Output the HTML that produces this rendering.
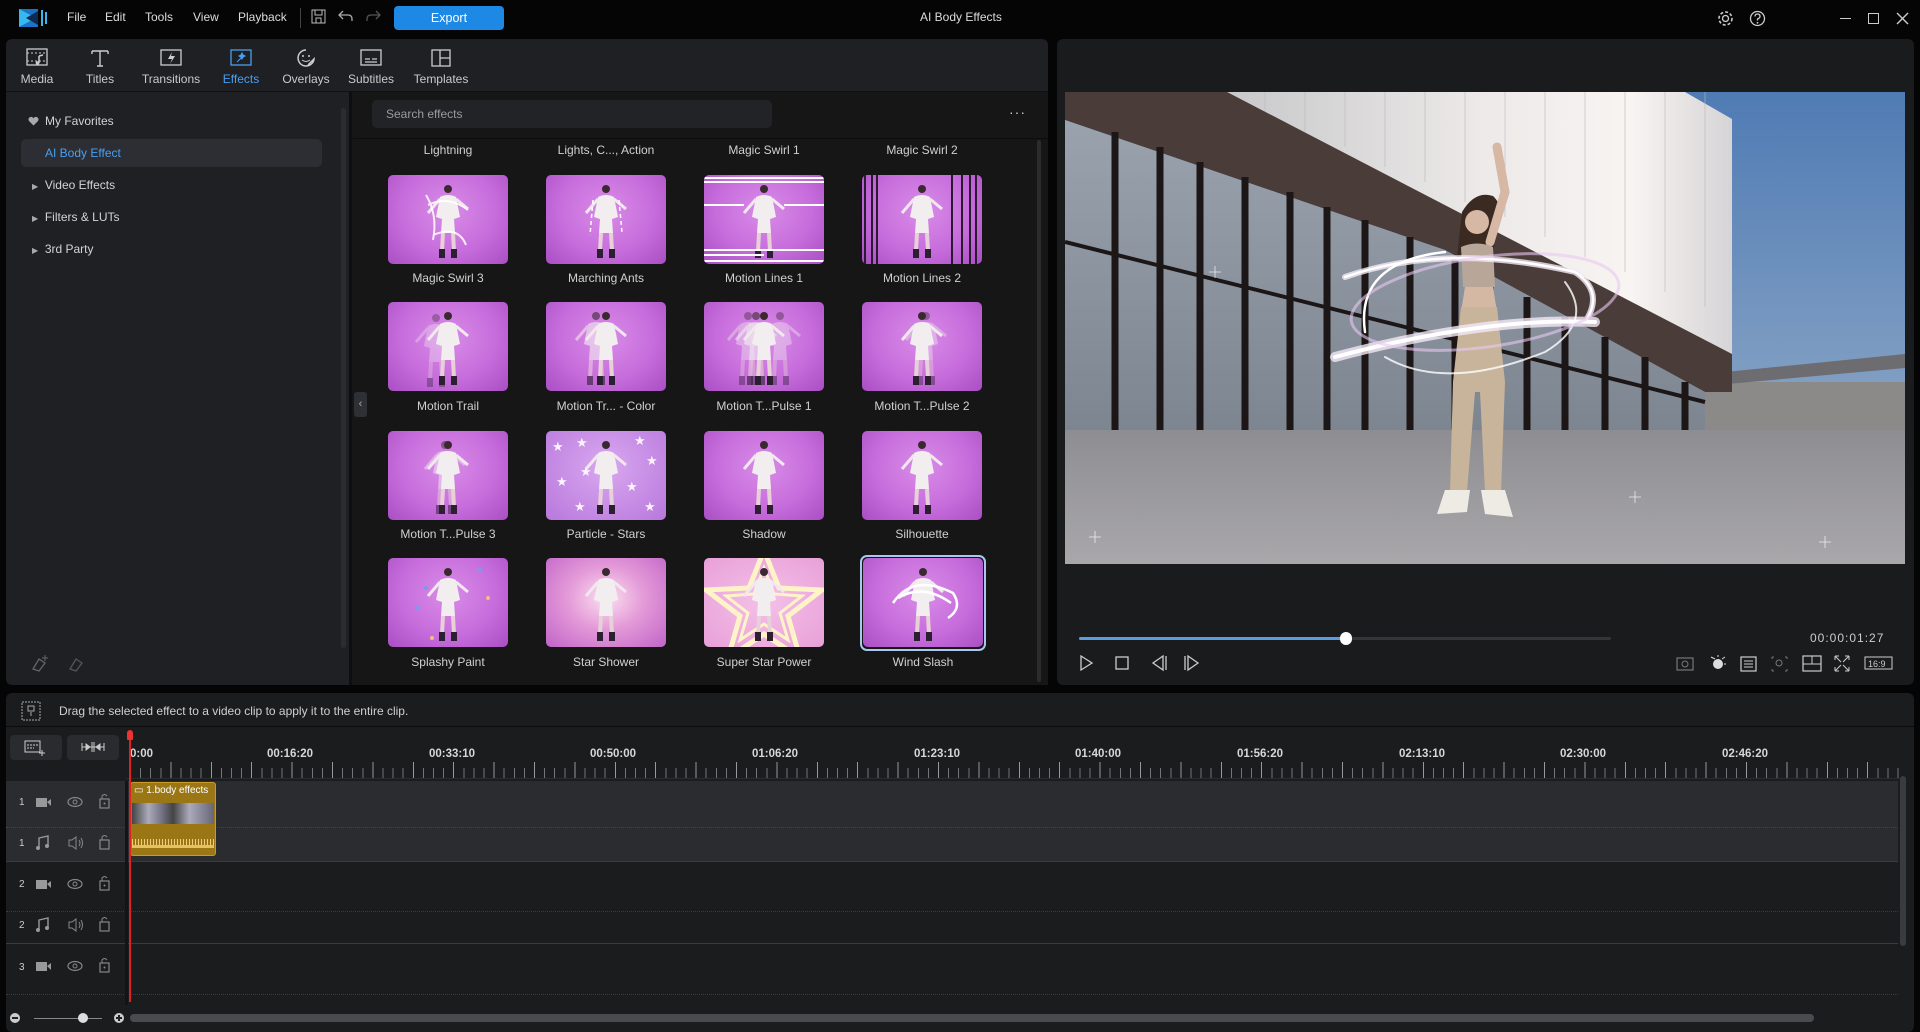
<!DOCTYPE html>
<html><head><meta charset="utf-8">
<style>
*{margin:0;padding:0;box-sizing:border-box}
body{width:1920px;height:1032px;background:#050506;font-family:"Liberation Sans",sans-serif;color:#cfd0d2;position:relative;overflow:hidden;font-size:12px}
.a{position:absolute}
.t{position:absolute;white-space:nowrap}
.panel{position:absolute;border-radius:6px}
.thumb{position:absolute;width:120px;height:89px;border-radius:5px;overflow:hidden;background:radial-gradient(ellipse at 50% 40%,#d98ce8 0%,#c76ddc 55%,#a94fc4 100%)}
.thumb svg{position:absolute;left:0;top:0}
.lbl{position:absolute;width:150px;text-align:center;font-size:12px;color:#cfd0d2}
.tab{position:absolute;top:48px;width:70px;text-align:center;font-size:12px;color:#c9cacc}
.tab svg{display:block;margin:0 auto 4px}
.tree{position:absolute;font-size:12px;color:#d2d3d5}
.rl{position:absolute;top:748px;font-size:11.5px;font-weight:bold;color:#d6d7d9}
.ic{position:absolute}
</style></head><body>
<svg width="0" height="0" style="position:absolute">
<defs>
<g id="fig">
<circle cx="60" cy="14" r="4" fill="#3a2a30"/>
<path d="M52 22 Q60 18 68 22 L72 42 L66 44 L67 58 L53 58 L54 44 L48 42 Z" fill="#f2eef0"/>
<path d="M52 24 L40 38 M68 24 L80 34" stroke="#f0e8ec" stroke-width="3" fill="none"/>
<path d="M55 58 L54 76 M65 58 L66 76" stroke="#e8d0d8" stroke-width="4"/>
<rect x="51" y="74" width="6" height="9" fill="#2a2030"/><rect x="63" y="74" width="6" height="9" fill="#2a2030"/>
</g>
</defs>
</svg>

<div class="a" style="left:0;top:0;width:1920px;height:39px;background:#050506"></div>
<svg class="ic" style="left:18px;top:8px" width="30" height="20" viewBox="0 0 30 20"><path d="M1 1 L20 1 L20 19 L1 19 Z" fill="#1a73c8"/><path d="M1 1 L18 10 L1 19 Z" fill="#38b8f0"/><path d="M8 10 L20 3 L20 17 Z" fill="#0d2a50"/><rect x="23" y="2" width="2" height="16" fill="#38b8f0"/><rect x="27" y="4" width="2" height="12" fill="#38b8f0"/></svg>
<div class="t" style="left:67px;top:10px;font-size:12px;color:#ddd">File</div>
<div class="t" style="left:105px;top:10px;font-size:12px;color:#ddd">Edit</div>
<div class="t" style="left:145px;top:10px;font-size:12px;color:#ddd">Tools</div>
<div class="t" style="left:193px;top:10px;font-size:12px;color:#ddd">View</div>
<div class="t" style="left:238px;top:10px;font-size:12px;color:#ddd">Playback</div>
<div class="a" style="left:300px;top:8px;width:1px;height:20px;background:#444"></div>
<svg class="ic" style="left:311px;top:9px" width="15" height="15" viewBox="0 0 15 15"><rect x="1" y="1" width="13" height="13" fill="none" stroke="#bbb"/><rect x="4" y="1" width="7" height="5" fill="none" stroke="#bbb"/><rect x="5" y="9" width="5" height="5" fill="none" stroke="#bbb"/></svg>
<svg class="ic" style="left:338px;top:10px" width="16" height="12" viewBox="0 0 16 12"><path d="M5 1 L1 5 L5 9 M1 5 H10 Q14 5 14 9 V11" fill="none" stroke="#aaa" stroke-width="1.3"/></svg>
<svg class="ic" style="left:365px;top:10px" width="16" height="12" viewBox="0 0 16 12"><path d="M11 1 L15 5 L11 9 M15 5 H6 Q2 5 2 9 V11" fill="none" stroke="#555" stroke-width="1.3"/></svg>
<div class="a" style="left:394px;top:6px;width:110px;height:24px;background:#1e88e5;border-radius:4px;color:#fff;text-align:center;line-height:24px;font-size:12.5px">Export</div>
<div class="t" style="left:920px;top:10px;font-size:12px;color:#ddd">AI Body Effects</div>
<svg class="ic" style="left:1717px;top:10px" width="17" height="17" viewBox="0 0 17 17"><circle cx="8.5" cy="8.5" r="3" fill="none" stroke="#ccc" stroke-width="1.3"/><circle cx="8.5" cy="8.5" r="6.5" fill="none" stroke="#ccc" stroke-width="1.6" stroke-dasharray="3 2"/></svg>
<svg class="ic" style="left:1749px;top:10px" width="17" height="17" viewBox="0 0 17 17"><circle cx="8.5" cy="8.5" r="7" fill="none" stroke="#ccc" stroke-width="1.3"/><path d="M6 6.5 Q6 4 8.5 4 Q11 4 11 6.5 Q11 8 8.5 9 V10.5" fill="none" stroke="#ccc" stroke-width="1.3"/><circle cx="8.5" cy="12.8" r="0.9" fill="#ccc"/></svg>
<div class="a" style="left:1840px;top:18px;width:11px;height:1px;background:#ccc"></div>
<div class="a" style="left:1868px;top:13px;width:11px;height:11px;border:1.3px solid #ccc"></div>
<svg class="ic" style="left:1896px;top:12px" width="13" height="13" viewBox="0 0 13 13"><path d="M1 1 L12 12 M12 1 L1 12" stroke="#ccc" stroke-width="1.4"/></svg>

<div class="panel" style="left:6px;top:39px;width:1042px;height:646px;background:#1f2023"></div>
<div class="a" style="left:6px;top:91px;width:1042px;height:1px;background:#111"></div>
<div class="tab" style="left:2px"><svg width="22" height="20" viewBox="0 0 22 20"><rect x="1" y="1" width="20" height="16" fill="none" stroke="#ccc" stroke-width="1.3"/><path d="M1 5 H21 M1 13 H21" stroke="#ccc" stroke-dasharray="2 2"/><path d="M13 8 V15 M13 8 L17 7" stroke="#ccc" stroke-width="1.5"/><circle cx="11.5" cy="15" r="1.8" fill="#ccc"/></svg>Media</div>
<div class="tab" style="left:65px"><svg width="22" height="20" viewBox="0 0 22 20"><path d="M3 3 H19 M11 3 V18 M3 3 V6 M19 3 V6 M8 18 H14" stroke="#ccc" stroke-width="1.4" fill="none"/></svg>Titles</div>
<div class="tab" style="left:136px"><svg width="22" height="20" viewBox="0 0 22 20"><rect x="1" y="2" width="20" height="15" fill="none" stroke="#ccc" stroke-width="1.3"/><path d="M12 4 L8 11 H12 L10 16 L15 8 H11 Z" fill="#ccc"/></svg>Transitions</div>
<div class="tab" style="left:206px;color:#4a9ff0"><svg width="22" height="20" viewBox="0 0 22 20"><rect x="1" y="2" width="20" height="15" fill="none" stroke="#4a9ff0" stroke-width="1.3"/><path d="M7 14 L13 8 M12 5 L13 7 L15 8 L13 9 L12 11 L11 9 L9 8 L11 7 Z" stroke="#4a9ff0" fill="#4a9ff0"/></svg>Effects</div>
<div class="tab" style="left:271px"><svg width="22" height="20" viewBox="0 0 22 20"><path d="M11 2 A8 8 0 1 0 19 11 L13 17" fill="none" stroke="#ccc" stroke-width="1.5"/><circle cx="8" cy="8" r="1" fill="#ccc"/><circle cx="14" cy="8" r="1" fill="#ccc"/><path d="M7 12 Q11 15 15 12" fill="none" stroke="#ccc"/></svg>Overlays</div>
<div class="tab" style="left:336px"><svg width="22" height="20" viewBox="0 0 22 20"><rect x="1" y="2" width="20" height="15" fill="none" stroke="#ccc" stroke-width="1.3"/><path d="M5 11 H10 M12 11 H17 M5 14 H17" stroke="#ccc" stroke-width="1.3"/></svg>Subtitles</div>
<div class="tab" style="left:406px"><svg width="22" height="20" viewBox="0 0 22 20"><rect x="2" y="2" width="18" height="16" fill="none" stroke="#ccc" stroke-width="1.3"/><path d="M10 2 V18 M10 10 H20" stroke="#ccc" stroke-width="1.3"/></svg>Templates</div>

<svg class="ic" style="left:28px;top:116px" width="11" height="10" viewBox="0 0 11 10"><path d="M5.5 9.5 L1 5 Q-0.5 2 2.5 1 Q4.5 0.5 5.5 2.5 Q6.5 0.5 8.5 1 Q11.5 2 10 5 Z" fill="#aaa"/></svg>
<div class="tree" style="left:45px;top:114px">My Favorites</div>
<div class="a" style="left:21px;top:139px;width:301px;height:28px;background:#2c2e33;border-radius:5px"></div>
<div class="tree" style="left:45px;top:146px;color:#4a9ff0">AI Body Effect</div>
<div class="tree" style="left:32px;top:178px"><span style="font-size:8px;color:#aaa">▶</span>&nbsp; Video Effects</div>
<div class="tree" style="left:32px;top:210px"><span style="font-size:8px;color:#aaa">▶</span>&nbsp; Filters &amp; LUTs</div>
<div class="tree" style="left:32px;top:242px"><span style="font-size:8px;color:#aaa">▶</span>&nbsp; 3rd Party</div>
<div class="a" style="left:341px;top:108px;width:5px;height:540px;background:#2b2c30;border-radius:3px"></div>
<svg class="ic" style="left:30px;top:654px" width="20" height="18" viewBox="0 0 20 18"><path d="M3 15 L9 5 L15 9 L9 17 Z" fill="none" stroke="#666" stroke-width="1.3"/><path d="M15 1 V7 M12 4 H18" stroke="#666"/></svg>
<svg class="ic" style="left:67px;top:654px" width="20" height="18" viewBox="0 0 20 18"><path d="M3 15 L9 5 L15 9 L9 17 Z" fill="none" stroke="#555" stroke-width="1.3"/></svg>

<div class="a" style="left:352px;top:92px;width:696px;height:593px;background:#161617"></div>
<div class="a" style="left:349px;top:92px;width:3px;height:593px;background:#0e0e0f"></div>
<div class="a" style="left:372px;top:100px;width:400px;height:28px;background:#222326;border-radius:5px"></div>
<div class="t" style="left:386px;top:107px;color:#9a9b9e">Search effects</div>
<div class="t" style="left:1009px;top:104px;color:#ccc;font-size:14px;letter-spacing:1px">···</div>
<div class="a" style="left:353px;top:138px;width:695px;height:1px;background:#0c0c0c"></div>
<div class="a" style="left:1037px;top:140px;width:4px;height:542px;background:#2b2c30;border-radius:3px"></div>
<div class="a" style="left:354px;top:392px;width:13px;height:25px;background:#2e3035;border-radius:3px;color:#aaa;font-size:11px;text-align:center;line-height:25px">‹</div>

<div class="lbl" style="left:373px;top:143px">Lightning</div>
<div class="lbl" style="left:531px;top:143px">Lights, C..., Action</div>
<div class="lbl" style="left:689px;top:143px">Magic Swirl 1</div>
<div class="lbl" style="left:847px;top:143px">Magic Swirl 2</div>

<div class="thumb" style="left:388px;top:175px"><svg width="120" height="89"><use href="#fig"/><path d="M40 30 Q60 20 80 35 M45 60 Q70 50 78 70 M38 20 Q50 40 45 65" stroke="#fff" stroke-width="2" fill="none" opacity=".85"/></svg></div>
<div class="thumb" style="left:546px;top:175px"><svg width="120" height="89"><use href="#fig"/><path d="M47 25 L44 60 M73 25 L76 58" stroke="#fff" stroke-width="1.5" stroke-dasharray="4 3"/></svg></div>
<div class="thumb" style="left:704px;top:175px"><svg width="120" height="89"><use href="#fig"/><path d="M0 3 H120 M0 7 H120 M0 30 H40 M80 30 H120 M0 75 H120 M0 80 H60 M0 86 H120" stroke="#fff" stroke-width="2"/></svg></div>
<div class="thumb" style="left:862px;top:175px"><svg width="120" height="89"><use href="#fig"/><path d="M3 0 V89 M10 0 V89 M15 0 V89 M90 0 V89 M100 0 V89 M108 0 V89 M114 0 V89" stroke="#2a1a30" stroke-width="2"/></svg></div>
<div class="lbl" style="left:373px;top:271px">Magic Swirl 3</div>
<div class="lbl" style="left:531px;top:271px">Marching Ants</div>
<div class="lbl" style="left:689px;top:271px">Motion Lines 1</div>
<div class="lbl" style="left:847px;top:271px">Motion Lines 2</div>

<div class="thumb" style="left:388px;top:302px"><svg width="120" height="89"><g opacity=".35" transform="translate(-12,2)"><use href="#fig"/></g><use href="#fig"/></svg></div>
<div class="thumb" style="left:546px;top:302px"><svg width="120" height="89"><g opacity=".6" transform="translate(-10,0)"><use href="#fig"/></g><use href="#fig"/></svg></div>
<div class="thumb" style="left:704px;top:302px"><svg width="120" height="89"><g opacity=".4" transform="translate(-16,0)"><use href="#fig"/></g><g opacity=".4" transform="translate(16,0)"><use href="#fig"/></g><g opacity=".6" transform="translate(-8,0)"><use href="#fig"/></g><use href="#fig"/></svg></div>
<div class="thumb" style="left:862px;top:302px"><svg width="120" height="89"><g opacity=".4" transform="translate(4,0)"><use href="#fig"/></g><use href="#fig"/></svg></div>
<div class="lbl" style="left:373px;top:399px">Motion Trail</div>
<div class="lbl" style="left:531px;top:399px">Motion Tr... - Color</div>
<div class="lbl" style="left:689px;top:399px">Motion T...Pulse 1</div>
<div class="lbl" style="left:847px;top:399px">Motion T...Pulse 2</div>

<div class="thumb" style="left:388px;top:431px"><svg width="120" height="89"><g opacity=".5" transform="translate(-3,0)"><use href="#fig"/></g><use href="#fig"/></svg></div>
<div class="thumb" style="left:546px;top:431px;background:radial-gradient(ellipse at 50% 40%,#d9a8f0,#b878dc)"><svg width="120" height="89"><use href="#fig"/><g fill="#fff" opacity=".9" font-size="13" font-family="DejaVu Sans"><text x="6" y="20">★</text><text x="30" y="16">★</text><text x="88" y="14">★</text><text x="100" y="34">★</text><text x="10" y="55">★</text><text x="28" y="80">★</text><text x="80" y="60">★</text><text x="98" y="80">★</text><text x="34" y="45">★</text></g></svg></div>
<div class="thumb" style="left:704px;top:431px"><svg width="120" height="89"><use href="#fig"/></svg></div>
<div class="thumb" style="left:862px;top:431px"><svg width="120" height="89"><use href="#fig"/></svg></div>
<div class="lbl" style="left:373px;top:527px">Motion T...Pulse 3</div>
<div class="lbl" style="left:531px;top:527px">Particle - Stars</div>
<div class="lbl" style="left:689px;top:527px">Shadow</div>
<div class="lbl" style="left:847px;top:527px">Silhouette</div>

<div class="thumb" style="left:388px;top:558px"><svg width="120" height="89"><use href="#fig"/><g fill="#6fa0f0"><circle cx="30" cy="50" r="2"/><circle cx="92" cy="12" r="2"/><circle cx="38" cy="30" r="2"/></g><g fill="#f0c080"><circle cx="100" cy="40" r="2"/><circle cx="44" cy="80" r="2"/></g></svg></div>
<div class="thumb" style="left:546px;top:558px;background:radial-gradient(ellipse at 50% 45%,#fbe0f0 0%,#e49ad8 45%,#c064c8 100%)"><svg width="120" height="89"><use href="#fig"/></svg></div>
<div class="thumb" style="left:704px;top:558px;background:radial-gradient(ellipse at 50% 50%,#f4c0e8,#e8a0d8)"><svg width="120" height="89"><path d="M60 -8 L75 30 L118 32 L84 58 L96 100 L60 76 L24 100 L36 58 L2 32 L45 30 Z" fill="none" stroke="#fff4c8" stroke-width="5"/><path d="M60 10 L70 36 L98 38 L76 55 L84 82 L60 66 L36 82 L44 55 L22 38 L50 36 Z" fill="none" stroke="#fff4c8" stroke-width="3"/><use href="#fig"/></svg></div>
<div class="a" style="left:860px;top:555px;width:126px;height:96px;border:2px solid #a8c8ee;border-radius:7px"></div>
<div class="thumb" style="left:863px;top:558px"><svg width="120" height="89"><use href="#fig"/><path d="M30 45 Q50 15 90 35 Q100 50 85 60 M35 40 Q60 25 88 45" stroke="#fff" stroke-width="2.5" fill="none"/></svg></div>
<div class="lbl" style="left:373px;top:655px">Splashy Paint</div>
<div class="lbl" style="left:531px;top:655px">Star Shower</div>
<div class="lbl" style="left:689px;top:655px">Super Star Power</div>
<div class="lbl" style="left:848px;top:655px">Wind Slash</div>

<div class="panel" style="left:1057px;top:39px;width:857px;height:646px;background:#1a1b1d"></div>
<svg class="a" style="left:1065px;top:92px" width="840" height="472" viewBox="0 0 840 472">
<defs>
<linearGradient id="sky" x1="0" y1="0" x2="0" y2="1"><stop offset="0" stop-color="#4f7bb4"/><stop offset="1" stop-color="#9fb4cc"/></linearGradient>
<linearGradient id="wall" x1="0" y1="0" x2="1" y2="0"><stop offset="0" stop-color="#c8c8ca"/><stop offset=".5" stop-color="#ece9e8"/><stop offset=".8" stop-color="#f8f4f2"/><stop offset="1" stop-color="#d6d4d6"/></linearGradient>
<linearGradient id="pane" x1="0" y1="0" x2="0" y2="1"><stop offset="0" stop-color="#9aa2ae"/><stop offset="1" stop-color="#7c8590"/></linearGradient>
<linearGradient id="gnd" x1="0" y1="0" x2="0" y2="1"><stop offset="0" stop-color="#8e8e92"/><stop offset="1" stop-color="#a9a7aa"/></linearGradient>
</defs>
<rect width="840" height="472" fill="url(#sky)"/>
<rect x="640" y="290" width="200" height="60" fill="#8b8a88"/>
<path d="M640 282 L840 262 L840 276 L640 294 Z" fill="#6d6c70"/>
<path d="M162 0 L620 0 L667 27 L667 262 L640 262 Z" fill="url(#wall)"/>
<g stroke="#b8b6b8" stroke-width="1" opacity=".6"><path d="M200 0 V20 M240 0 V40 M280 0 V55 M320 0 V75 M360 0 V90 M400 0 V110 M440 0 V125 M480 0 V145 M520 0 V165 M560 0 V180 M600 0 V200 M640 0 V215"/></g>
<path d="M0 0 L162 0 L667 262 L667 300 L640 300 L380 158 L0 28 Z" fill="#4a3c38"/>
<path d="M0 28 L380 158 L640 300 L640 340 L0 340 Z" fill="url(#pane)"/>
<g stroke="#1c1616" stroke-width="7"><path d="M50 40 V340 M95 55 V340 M135 70 V340 M180 85 V340 M225 100 V340 M262 115 V340 M300 128 V340 M345 145 V340 M390 165 V340 M425 185 V340 M462 205 V340 M500 225 V340 M540 245 V340 M580 265 V340 M620 290 V340"/></g>
<path d="M0 150 L640 310" stroke="#1c1616" stroke-width="4"/>
<rect x="0" y="338" width="840" height="134" fill="url(#gnd)"/>
<path d="M397 120 Q410 98 428 104 Q440 115 432 135 L428 160 L392 165 Z" fill="#3a2a22"/>
<circle cx="412" cy="130" r="12" fill="#d6b8a4"/>
<path d="M425 150 L440 100 L432 55" stroke="#d6b8a4" stroke-width="9" fill="none" stroke-linecap="round"/>
<path d="M396 155 Q412 148 428 155 L430 195 L398 195 Z" fill="#b8a698"/>
<path d="M400 195 L428 195 L432 220 L396 220 Z" fill="#d4b8a4"/>
<path d="M396 215 L432 215 L440 290 L436 400 L420 400 L415 300 L410 300 L402 400 L385 400 L388 290 Z" fill="#c8b49a"/>
<path d="M380 398 L405 398 L402 420 L372 422 Z M416 398 L440 398 L448 425 L420 422 Z" fill="#eeeae4"/>
<g fill="none" stroke="#f3e8f6" stroke-linecap="round" opacity=".8">
<path d="M270 265 Q420 225 530 230" stroke-width="10"/>
<path d="M280 185 Q380 150 510 180 Q540 200 520 230" stroke-width="6"/>
</g>
<g fill="none" stroke="#fff" stroke-linecap="round">
<path d="M270 265 Q420 225 530 230" stroke-width="4"/>
<path d="M280 185 Q380 150 510 180 Q540 200 520 230" stroke-width="2.5"/>
<path d="M300 240 Q290 170 380 160" stroke-width="2.5"/>
<path d="M320 265 Q380 300 480 260 Q530 230 500 190" stroke-width="2" opacity=".8"/>
<ellipse cx="420" cy="210" rx="135" ry="45" stroke="#e8c8f0" stroke-width="3" opacity=".6" transform="rotate(-8 420 210)"/>
</g>
<g stroke="#fff" stroke-width="0.8" opacity=".8"><path d="M24 445 H36 M30 439 V451 M564 405 H576 M570 399 V411 M144 180 H156 M150 174 V186 M754 450 H766 M760 444 V456"/></g>
</svg>
<div class="a" style="left:1079px;top:637px;width:532px;height:3px;background:#333539;border-radius:2px"></div>
<div class="a" style="left:1079px;top:637px;width:267px;height:3px;background:#5b9be0;border-radius:2px"></div>
<div class="a" style="left:1340px;top:632px;width:12px;height:13px;background:#fff;border-radius:6px"></div>
<div class="t" style="left:1810px;top:631px;font-size:12px;color:#ccc;letter-spacing:1px">00:00:01:27</div>
<svg class="ic" style="left:1079px;top:654px" width="140" height="18" viewBox="0 0 140 18"><path d="M2 2 L13 9 L2 16 Z" fill="none" stroke="#ccc" stroke-width="1.3"/><rect x="37" y="3" width="12" height="12" fill="none" stroke="#ccc" stroke-width="1.3"/><path d="M84 2 L74 9 L84 16 Z M87 2 V16" fill="none" stroke="#ccc" stroke-width="1.3"/><path d="M106 2 V16 M109 2 L119 9 L109 16 Z" fill="none" stroke="#ccc" stroke-width="1.3"/></svg>
<svg class="ic" style="left:1675px;top:653px" width="240" height="20" viewBox="0 0 240 20"><rect x="2" y="5" width="16" height="12" fill="none" stroke="#777" stroke-width="1.2"/><circle cx="10" cy="11" r="3" fill="none" stroke="#777"/><circle cx="43" cy="11" r="5" fill="#ddd"/><path d="M36 4 L40 6 M43 2 V4 M50 4 L47 6 M51 11 H49" stroke="#ddd"/><rect x="66" y="4" width="15" height="14" fill="none" stroke="#ccc" stroke-width="1.2"/><path d="M69 8 H78 M69 11 H78 M69 14 H78" stroke="#ccc"/><path d="M97 4 H99 M97 4 V6 M112 4 H110 M112 4 V6 M97 18 V16 M97 18 H99 M112 18 H110 M112 18 V16" stroke="#777"/><circle cx="104" cy="10" r="3" fill="none" stroke="#777"/><rect x="128" y="3" width="18" height="15" fill="none" stroke="#ccc" stroke-width="1.2"/><path d="M128 11 H146 M137 3 V11" stroke="#ccc"/><path d="M160 3 L166 9 M174 3 L168 9 M160 18 L166 12 M174 18 L168 12 M160 3 H164 M160 3 V7 M174 3 H170 M174 3 V7 M160 18 H164 M160 18 V14 M174 18 H170 M174 18 V14" stroke="#ccc" fill="none"/><rect x="190" y="4" width="27" height="12" fill="none" stroke="#ccc"/><text x="193" y="14" font-size="9" fill="#ccc" font-family="Liberation Sans">16:9</text></svg>

<div class="panel" style="left:6px;top:693px;width:1908px;height:339px;background:#1b1c1e"></div>
<div class="a" style="left:6px;top:726px;width:1908px;height:1px;background:#0c0c0d"></div>
<svg class="ic" style="left:21px;top:701px" width="20" height="20" viewBox="0 0 20 20"><rect x="1" y="1" width="18" height="18" fill="none" stroke="#aaa" stroke-dasharray="2 1"/><rect x="7" y="5" width="6" height="5" fill="none" stroke="#aaa"/><path d="M10 11 V15" stroke="#aaa"/></svg>
<div class="t" style="left:59px;top:704px;font-size:12px;color:#cfd0d2">Drag the selected effect to a video clip to apply it to the entire clip.</div>
<div class="a" style="left:10px;top:735px;width:52px;height:25px;background:#2a2b2f;border-radius:4px"></div>
<svg class="ic" style="left:24px;top:740px" width="22" height="16" viewBox="0 0 22 16"><rect x="1" y="1" width="15" height="11" fill="none" stroke="#ccc"/><path d="M3 5 H14 M3 8 H10" stroke="#ccc" stroke-dasharray="2 1"/><path d="M18 10 V16 M15 13 H21" stroke="#ccc"/></svg>
<div class="a" style="left:67px;top:735px;width:52px;height:25px;background:#2a2b2f;border-radius:4px"></div>
<svg class="ic" style="left:81px;top:741px" width="24" height="12" viewBox="0 0 24 12"><path d="M1 2 V10 M23 2 V10 M1 6 H23 M11 1 V11 M13 1 V11 M5 3 L9 6 L5 9 Z M19 3 L15 6 L19 9 Z" stroke="#ccc" fill="#ccc"/></svg>
<div class="a" style="left:130px;top:768px;width:1770px;height:10px;background:repeating-linear-gradient(90deg,#8a8b8e 0 1px,transparent 1px 10.1px);opacity:.8"></div>
<div class="a" style="left:130px;top:762px;width:1770px;height:16px;background:repeating-linear-gradient(90deg,#999 0 1px,transparent 1px 40.4px)"></div>
<div class="a" style="left:126px;top:778px;width:1780px;height:1px;background:#2a2b2e"></div>
<div class="rl" style="left:130px">0:00</div>
<div class="rl" style="left:267px">00:16:20</div>
<div class="rl" style="left:429px">00:33:10</div>
<div class="rl" style="left:590px">00:50:00</div>
<div class="rl" style="left:752px">01:06:20</div>
<div class="rl" style="left:914px">01:23:10</div>
<div class="rl" style="left:1075px">01:40:00</div>
<div class="rl" style="left:1237px">01:56:20</div>
<div class="rl" style="left:1399px">02:13:10</div>
<div class="rl" style="left:1560px">02:30:00</div>
<div class="rl" style="left:1722px">02:46:20</div>
<div class="a" style="left:6px;top:781px;width:1892px;height:80px;background:#2b2c30"></div>
<div class="a" style="left:6px;top:827px;width:1892px;height:1px;border-top:1px dotted #444"></div>
<div class="a" style="left:6px;top:861px;width:1892px;height:1px;background:#3a3b3e"></div>
<div class="a" style="left:6px;top:911px;width:1892px;height:1px;border-top:1px dotted #3a3b3e"></div>
<div class="a" style="left:6px;top:943px;width:1892px;height:1px;background:#3a3b3e"></div>
<div class="a" style="left:6px;top:994px;width:1892px;height:1px;border-top:1px dotted #3a3b3e"></div>
<div class="a" style="left:125px;top:781px;width:3px;height:224px;background:#141416"></div>
<div class="a" style="left:1900px;top:776px;width:6px;height:170px;background:#3a3b3f;border-radius:3px"></div>

<div class="t" style="left:19px;top:797px;font-size:10px;color:#ccc">1</div>
<div class="t" style="left:19px;top:838px;font-size:10px;color:#ccc">1</div>
<div class="t" style="left:19px;top:879px;font-size:10px;color:#ccc">2</div>
<div class="t" style="left:19px;top:920px;font-size:10px;color:#ccc">2</div>
<div class="t" style="left:19px;top:962px;font-size:10px;color:#ccc">3</div>
<svg class="ic" style="left:34px;top:791px" width="85" height="190" viewBox="0 0 85 190">
<g id="vrow"><rect x="2" y="7" width="11" height="9" fill="#999"/><path d="M13 11 L17 8 V15 Z" fill="#999"/><ellipse cx="41" cy="11" rx="7" ry="4.5" fill="none" stroke="#888" stroke-width="1.2"/><circle cx="41" cy="11" r="2" fill="none" stroke="#888"/><rect x="66" y="8" width="9" height="9" fill="none" stroke="#888" stroke-width="1.2"/><path d="M68 8 V5 Q70.5 2 73 5" fill="none" stroke="#888"/><circle cx="70.5" cy="12.5" r="1" fill="#888"/></g>
<g transform="translate(0,41)"><path d="M5 16 V6 L14 4 V14" fill="none" stroke="#999" stroke-width="1.4"/><circle cx="4" cy="16" r="2" fill="#999"/><circle cx="13" cy="14" r="2" fill="#999"/><path d="M35 8 H38 L42 5 V17 L38 14 H35 Z M45 8 Q47 11 45 14 M47 6 Q50 11 47 16" fill="none" stroke="#888"/><rect x="66" y="8" width="9" height="9" fill="none" stroke="#888" stroke-width="1.2"/><path d="M68 8 V5 Q70.5 2 73 5" fill="none" stroke="#888"/></g>
<use href="#vrow" transform="translate(0,82)"/>
<g transform="translate(0,123)"><path d="M5 16 V6 L14 4 V14" fill="none" stroke="#999" stroke-width="1.4"/><circle cx="4" cy="16" r="2" fill="#999"/><circle cx="13" cy="14" r="2" fill="#999"/><path d="M35 8 H38 L42 5 V17 L38 14 H35 Z M45 8 Q47 11 45 14 M47 6 Q50 11 47 16" fill="none" stroke="#888"/><rect x="66" y="8" width="9" height="9" fill="none" stroke="#888" stroke-width="1.2"/><path d="M68 8 V5 Q70.5 2 73 5" fill="none" stroke="#888"/></g>
<use href="#vrow" transform="translate(0,164)"/>
</svg>

<div class="a" style="left:130px;top:782px;width:86px;height:74px;background:#9b7614;border-radius:3px;border:1px solid #c89a2a"></div>
<div class="t" style="left:134px;top:785px;font-size:10px;color:#fff">▭ 1.body effects</div>
<div class="a" style="left:132px;top:803px;width:82px;height:21px;background:linear-gradient(90deg,#444 0,#aab 20%,#667 40%,#444 50%,#aab 70%,#667 100%)"></div>
<div class="a" style="left:132px;top:839px;width:82px;height:7px;background:repeating-linear-gradient(90deg,#f0d080 0 1px,transparent 1px 3px)"></div>
<div class="a" style="left:132px;top:845px;width:82px;height:3px;background:#e8c060"></div>
<div class="a" style="left:129px;top:732px;width:2px;height:270px;background:#d22"></div>
<div class="a" style="left:127px;top:730px;width:6px;height:10px;background:#e33;border-radius:3px 3px 1px 1px"></div>

<div class="a" style="left:10px;top:1013px;width:10px;height:10px;background:#ccc;border-radius:5px"></div>
<div class="a" style="left:12px;top:1017px;width:6px;height:2px;background:#222"></div>
<div class="a" style="left:34px;top:1018px;width:68px;height:1px;background:#888"></div>
<div class="a" style="left:78px;top:1013px;width:10px;height:10px;background:#ddd;border-radius:5px"></div>
<div class="a" style="left:114px;top:1013px;width:10px;height:10px;background:#ccc;border-radius:5px"></div>
<div class="a" style="left:116px;top:1017px;width:6px;height:2px;background:#222"></div>
<div class="a" style="left:118px;top:1015px;width:2px;height:6px;background:#222"></div>
<div class="a" style="left:130px;top:1014px;width:1684px;height:8px;background:#4a4b4f;border-radius:4px"></div>
</body></html>
